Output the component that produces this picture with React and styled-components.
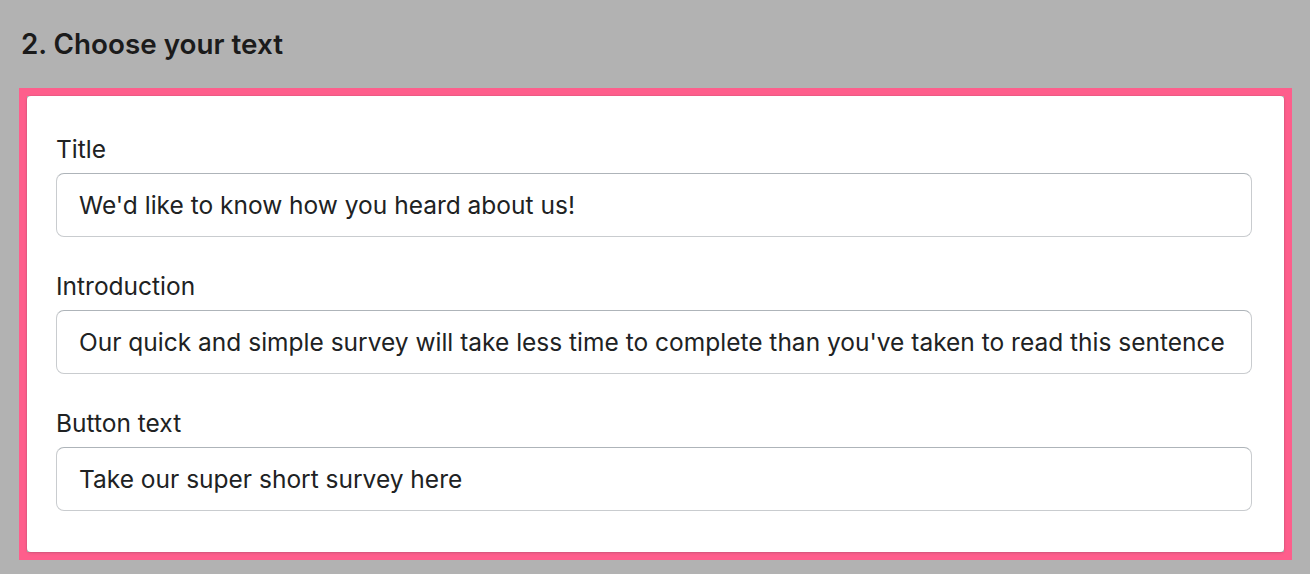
import React from 'react';
import styled, { createGlobalStyle } from 'styled-components';

const GlobalStyle = createGlobalStyle`
  html, body {
    margin: 0;
    padding: 0;
    background: #b2b2b2;
    font-family: Inter, "Noto Sans", "Liberation Sans", sans-serif;
    color: #202223;
  }
`;

const fields = [
  { label: 'Title', value: "We'd like to know how you heard about us!" },
  {
    label: 'Introduction',
    value: "Our quick and simple survey will take less time to complete than you've taken to read this sentence",
  },
  { label: 'Button text', value: 'Take our super short survey here' },
];

function App() {
  return (
    <>
      <GlobalStyle />
      <Page>
        <Heading>2. Choose your text</Heading>
        <Highlight>
          <Card>
            {fields.map((f) => (
              <Field key={f.label}>
                <Label>{f.label}</Label>
                <Input type="text" defaultValue={f.value} />
              </Field>
            ))}
          </Card>
        </Highlight>
      </Page>
    </>
  );
}

const Page = styled.main`
  width: 1310px;
  height: 574px;
  display: flex;
  flex-direction: column;
  box-sizing: border-box;
  padding: 0 18px 0 19px;
`;

const Heading = styled.h2`
  margin: 0;
  padding: 27px 0 0 2px;
  height: 88px;
  box-sizing: border-box;
  font-size: 27.8px;
  line-height: 34px;
  font-weight: 600;
  color: #1b1b1b;
`;

const Highlight = styled.section`
  border: 8px solid #fe5e8c;
  width: 1273px;
  box-sizing: border-box;
`;

const Card = styled.div`
  background: #fff;
  border-radius: 4px;
  box-shadow: 0 0 0 1px rgba(63, 63, 68, 0.06), 0 1px 3px rgba(63, 63, 68, 0.2);
  padding: 37px 32px 41px 29px;
  display: flex;
  flex-direction: column;
  gap: 33px;
`;

const Field = styled.label`
  display: flex;
  flex-direction: column;
  gap: 8px;
`;

const Label = styled.span`
  font-size: 24.5px;
  line-height: 32px;
  color: #202223;
`;

const Input = styled.input`
  height: 64px;
  box-sizing: border-box;
  width: 100%;
  padding: 0 22px;
  border: 1px solid #c9cccf;
  border-top-color: #aeb4b9;
  border-radius: 8px;
  font-family: inherit;
  font-size: 24.5px;
  color: #202223;
  background: #fff;
  outline: none;
`;

export default App;
